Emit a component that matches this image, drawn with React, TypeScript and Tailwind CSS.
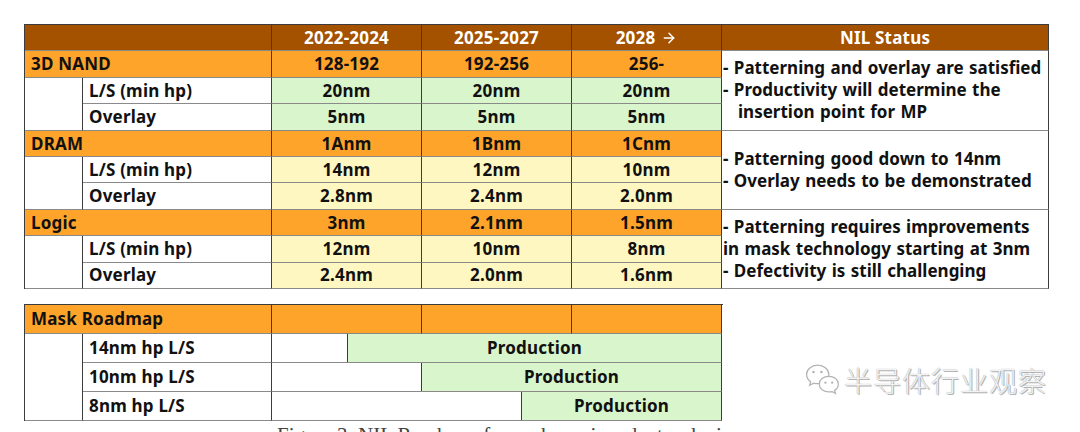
import type { ReactNode } from 'react'
import { ArrowRight } from 'lucide-react'

type Tone = 'dark' | 'orange' | 'green' | 'yellow' | 'white'

const toneClass: Record<Tone, string> = {
  dark: 'bg-[#a45100] text-white',
  orange: 'bg-[#ffa42b] text-[#111]',
  green: 'bg-[#d9f5cb] text-[#111]',
  yellow: 'bg-[#fff7c2] text-[#111]',
  white: 'bg-white text-[#111]',
}

function Cell({
  tone = 'white',
  className = '',
  children,
}: {
  tone?: Tone
  className?: string
  children?: ReactNode
}) {
  return (
    <div
      className={`flex items-center border-r border-b border-r-[#3c3c3c] border-b-[#8a8a8a] ${toneClass[tone]} ${className}`}
    >
      {children}
    </div>
  )
}

interface Device {
  name: string
  nodes: [string, string, string]
  ls: [string, string, string]
  overlay: [string, string, string]
  tone: Tone
  status: { text: string; indent?: string }[]
}

const devices: Device[] = [
  {
    name: '3D NAND',
    nodes: ['128-192', '192-256', '256-'],
    ls: ['20nm', '20nm', '20nm'],
    overlay: ['5nm', '5nm', '5nm'],
    tone: 'green',
    status: [
      { text: '- Patterning and overlay are satisfied' },
      { text: '- Productivity will determine the' },
      { text: 'insertion point for MP', indent: 'pl-[15px]' },
    ],
  },
  {
    name: 'DRAM',
    nodes: ['1Anm', '1Bnm', '1Cnm'],
    ls: ['14nm', '12nm', '10nm'],
    overlay: ['2.8nm', '2.4nm', '2.0nm'],
    tone: 'yellow',
    status: [
      { text: '- Patterning good down to 14nm' },
      { text: '- Overlay needs to be demonstrated' },
    ],
  },
  {
    name: 'Logic',
    nodes: ['3nm', '2.1nm', '1.5nm'],
    ls: ['12nm', '10nm', '8nm'],
    overlay: ['2.4nm', '2.0nm', '1.6nm'],
    tone: 'yellow',
    status: [
      { text: '- Patterning requires improvements' },
      { text: 'in mask technology starting at 3nm' },
      { text: '- Defectivity is still challenging' },
    ],
  },
]

const masks = [
  { label: '14nm hp L/S', blank: 'w-[76px]' },
  { label: '10nm hp L/S', blank: 'w-[150px]' },
  { label: '8nm hp L/S', blank: 'w-[250px]' },
]

function WeChatMark() {
  return (
    <svg width="36" height="34" viewBox="0 0 34 32" fill="none" stroke="#b4b4b4" strokeWidth="1.2">
      <path d="M12 2C6 2 1.5 6 1.5 10.8c0 2.8 1.5 5.2 3.9 6.8L4.4 21l3.9-2.1c1.2.3 2.4.5 3.7.5 6 0 10.5-3.9 10.5-8.6S18 2 12 2z" />
      <circle cx="8" cy="8.5" r="1.2" fill="#b4b4b4" stroke="none" />
      <circle cx="15.5" cy="8.5" r="1.2" fill="#b4b4b4" stroke="none" />
      <path
        d="M22.5 12.5c-5 0-9 3.3-9 7.4s4 7.4 9 7.4c1 0 2-.1 2.9-.4l3.4 1.8-.9-2.9c2.2-1.4 3.6-3.5 3.6-5.9 0-4.1-4-7.4-9-7.4z"
        fill="white"
      />
      <circle cx="19.3" cy="18.5" r="1.1" fill="#b4b4b4" stroke="none" />
      <circle cx="25.7" cy="18.5" r="1.1" fill="#b4b4b4" stroke="none" />
    </svg>
  )
}

export default function App() {
  return (
    <div className="relative h-[432px] w-[1080px] overflow-hidden bg-white pl-[24px] pt-[24px] font-['Noto_Sans',sans-serif] text-[17px] font-bold tracking-[0.2px]">
      <div className="grid w-[1025px] grid-cols-[58px_189px_150px_150px_150px_327px] grid-rows-[repeat(10,26.4px)] border-t border-l border-[#3c3c3c]">
        <Cell tone="dark" className="col-span-2" />
        <Cell tone="dark" className="justify-center">2022-2024</Cell>
        <Cell tone="dark" className="justify-center">2025-2027</Cell>
        <Cell tone="dark" className="justify-center gap-[6px]">
          2028
          <ArrowRight size={16} strokeWidth={2.25} />
        </Cell>
        <Cell tone="dark" className="justify-center">NIL Status</Cell>

        {devices.map((d) => (
          <div key={d.name} className="contents">
            <Cell tone="orange" className="col-span-2 pl-[6px]">
              {d.name}
            </Cell>
            {d.nodes.map((n, i) => (
              <Cell key={i} tone="orange" className="justify-center">
                {n}
              </Cell>
            ))}
            <Cell className="row-span-3 flex-col !items-start justify-center border-b-[#3c3c3c] pl-[1px] leading-[22px] tracking-normal whitespace-pre [word-spacing:1px]">
              {d.status.map((s) => (
                <div key={s.text} className={s.indent ?? ''}>
                  {s.text}
                </div>
              ))}
            </Cell>

            <Cell className="row-span-2" />
            <Cell className="pl-[6px]">L/S (min hp)</Cell>
            {d.ls.map((v, i) => (
              <Cell key={i} tone={d.tone} className="justify-center">
                {v}
              </Cell>
            ))}
            <Cell className="pl-[6px]">Overlay</Cell>
            {d.overlay.map((v, i) => (
              <Cell key={i} tone={d.tone} className="justify-center">
                {v}
              </Cell>
            ))}
          </div>
        ))}
      </div>

      <div className="mt-[15px] grid w-[699px] grid-cols-[58px_189px_150px_150px_150px] grid-rows-[repeat(4,29px)] border-t border-l border-[#3c3c3c]">
        <Cell tone="orange" className="col-span-2 pl-[6px]">
          Mask Roadmap
        </Cell>
        <Cell tone="orange" />
        <Cell tone="orange" />
        <Cell tone="orange" />
        <Cell className="row-span-3 border-b-[#3c3c3c]" />
        {masks.map((m) => (
          <div key={m.label} className="contents">
            <Cell className="pl-[6px]">{m.label}</Cell>
            <Cell className="col-span-3 !items-stretch">
              <div className={`${m.blank} shrink-0 border-r border-[#3c3c3c] bg-white`} />
              <div className="flex flex-1 items-center justify-center bg-[#d9f5cb]">Production</div>
            </Cell>
          </div>
        ))}
      </div>

      <div className="mt-[4px] pl-[253px] font-['Liberation_Serif',serif] text-[21px] leading-none font-normal tracking-normal text-[#444]">
        Figure 3. NIL Roadmap for each semiconductor device
      </div>

      <div className="absolute top-[363px] left-[805px] flex items-center gap-[3px]">
        <WeChatMark />
        <span className="font-['Noto_Sans_CJK_SC',sans-serif] text-[28px] leading-none font-light tracking-[1px] text-[#f2f2f2] [text-shadow:0_0_1px_#8a8a8a,1px_1px_0_#b8b8b8]">
          半导体行业观察
        </span>
      </div>
    </div>
  )
}
